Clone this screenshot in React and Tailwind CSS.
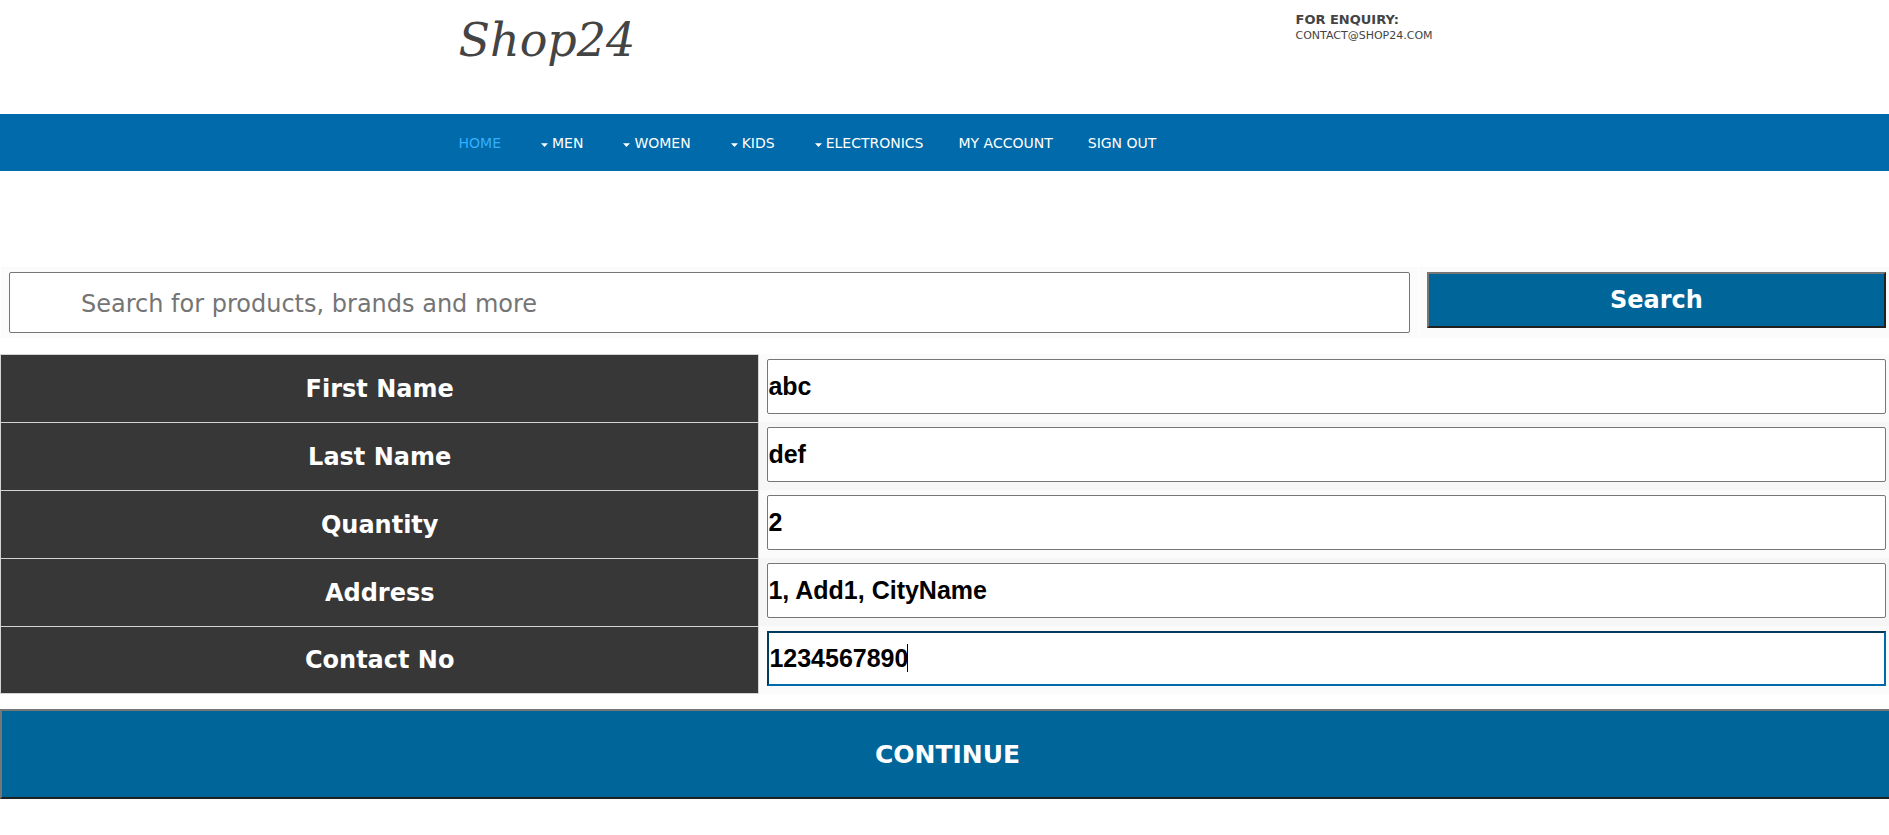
import React, { useState } from "react";

const NAV = [
  { label: "HOME", active: true },
  { label: "MEN", menu: true },
  { label: "WOMEN", menu: true },
  { label: "KIDS", menu: true },
  { label: "ELECTRONICS", menu: true },
  { label: "MY ACCOUNT" },
  { label: "SIGN OUT" },
];

const FIELDS = [
  { id: "firstName", label: "First Name", value: "abc" },
  { id: "lastName", label: "Last Name", value: "def" },
  { id: "quantity", label: "Quantity", value: "2" },
  { id: "address", label: "Address", value: "1, Add1, CityName" },
  { id: "contact", label: "Contact No", value: "1234567890", active: true },
];

function Header() {
  return (
    <header className="mx-auto flex h-[114px] max-w-[984px] items-start justify-between pl-1.5 text-[#444444]">
      <a
        href="#home"
        className="mt-3 font-['DejaVu_Serif',serif] text-[46px] leading-[56px] italic"
      >
        Shop24
      </a>
      <div className="w-[141px] pt-3 text-[13px] leading-4">
        <p className="font-bold">FOR ENQUIRY:</p>
        <p className="text-[11px]">CONTACT@SHOP24.COM</p>
      </div>
    </header>
  );
}

function Nav() {
  return (
    <nav className="bg-[#006aaa]">
      <ul className="mx-auto flex h-[57px] max-w-[984px] items-center gap-[35px] pl-1.5 text-[14px] leading-5 text-white">
        {NAV.map((item) => (
          <li key={item.label}>
            <a
              href="#nav"
              className={
                item.active
                  ? "flex items-center text-[#33b0ff]"
                  : "flex items-center"
              }
            >
              {item.menu && (
                <svg
                  className="mt-1 mr-1 ml-[5px] h-1 w-[7px]"
                  viewBox="0 0 7 4"
                  fill="currentColor"
                  aria-hidden="true"
                >
                  <path d="M0 0.3h7L3.5 4z" />
                </svg>
              )}
              {item.label}
            </a>
          </li>
        ))}
      </ul>
    </nav>
  );
}

function SearchBar() {
  return (
    <form
      className="mt-24 flex gap-px pl-px"
      onSubmit={(e) => e.preventDefault()}
    >
      <div className="flex-1 bg-[#fbfbfb] pt-[5px] pr-2 pb-[5px] pl-2">
        <input
          type="search"
          aria-label="Search"
          placeholder="Search for products, brands and more"
          className="h-[61px] w-full rounded-xs border border-[#767676] bg-white pt-0.5 pl-[71px] text-[24px] outline-none placeholder:text-[#757575]"
        />
      </div>
      <div className="w-[24.9%] bg-[#fbfbfb] pt-[5px] pr-[3px] pl-2">
        <button
          type="submit"
          className="h-14 w-full border-2 border-t-[#767676] border-r-[#212121] border-b-[#212121] border-l-[#767676] bg-[#006699] text-[24px] font-bold text-white"
        >
          Search
        </button>
      </div>
    </form>
  );
}

function Field({ field, value, onChange }) {
  return (
    <div className="group flex h-[68px] odd:bg-[#fbfbfb] even:bg-[#f6f6f6]">
      <label
        htmlFor={field.id}
        className="flex w-[40.2%] items-center justify-center border-x border-t border-[#d3d3d3] bg-[#373737] text-[24px] font-bold text-white group-last:border-b"
      >
        {field.label}
      </label>
      <div className="relative flex-1 pt-[5px] pr-[3px] pl-2">
        <input
          id={field.id}
          type="text"
          value={value}
          onChange={onChange}
          className={
            field.active
              ? "h-[55px] w-full border-2 border-t-[#003a5d] border-r-[#006aaa] border-b-[#006aaa] border-l-[#003a5d] bg-white font-['Liberation_Sans',sans-serif] text-[25px] font-bold text-black caret-transparent outline-none"
              : "h-[55px] w-full rounded-xs border border-[#767676] bg-white font-['Liberation_Sans',sans-serif] text-[25px] font-bold text-black outline-none"
          }
        />
        {field.active && (
          <span className="pointer-events-none absolute top-[18px] left-[148px] h-7 w-px bg-black" />
        )}
      </div>
    </div>
  );
}

export default function App() {
  const [values, setValues] = useState(() =>
    Object.fromEntries(FIELDS.map((f) => [f.id, f.value]))
  );

  return (
    <div className="min-h-screen overflow-x-hidden bg-white font-['DejaVu_Sans',sans-serif]">
      <Header />
      <Nav />
      <main>
        <SearchBar />
        <form className="mt-4" onSubmit={(e) => e.preventDefault()}>
          <div>
            {FIELDS.map((f) => (
              <Field
                key={f.id}
                field={f}
                value={values[f.id]}
                onChange={(e) =>
                  setValues({ ...values, [f.id]: e.target.value })
                }
              />
            ))}
          </div>
          <button
            type="submit"
            className="mt-[15px] h-[90px] w-[calc(100%+6px)] border-2 border-t-[#767676] border-r-[#212121] border-b-[#212121] border-l-[#767676] bg-[#006699] pt-0.5 text-[25px] font-bold text-white"
          >
            CONTINUE
          </button>
        </form>
      </main>
    </div>
  );
}
